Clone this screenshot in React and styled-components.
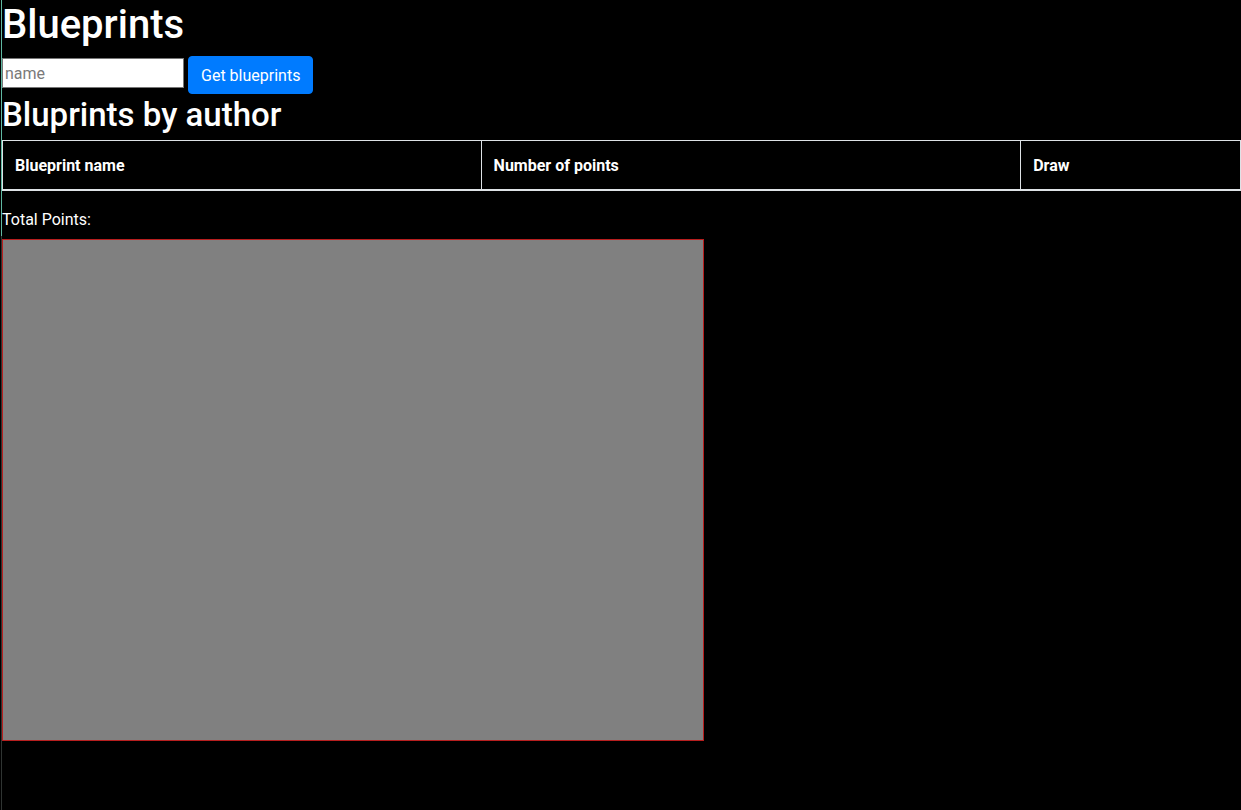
import React from "react";
import styled, { createGlobalStyle } from "styled-components";

const Global = createGlobalStyle`
  html, body {
    margin: 0;
    padding: 0;
    background-color: #000;
    min-height: 100%;
  }
  body {
    background-image: linear-gradient(to bottom, #5fb8a2 0, #5fb8a2 236px, #2f3432 236px, #2f3432 100%);
    background-size: 1px 100%;
    background-position: 1px 0;
    background-repeat: no-repeat;
    min-height: 810px;
    color: #fff;
    font-family: Roboto, "Open Sans", sans-serif;
    font-size: 16px;
    line-height: 1.5;
  }
  * { box-sizing: border-box; }
`;

const Page = styled.div`
  padding-left: 2px;
`;

const Title = styled.h1`
  margin: 0 0 8px 0;
  font-size: 40px;
  font-weight: 500;
  line-height: 50px;
  height: 48px;
`;

const SubTitle = styled.h2`
  margin: 0 0 8px 0;
  font-size: 33px;
  font-weight: 500;
  line-height: 41px;
  height: 38px;
`;

const SearchRow = styled.div`
  display: flex;
  align-items: flex-start;
  gap: 4px;
`;

const NameInput = styled.input`
  width: 182px;
  height: 30px;
  margin-top: 2px;
  padding: 1px 2px;
  border: 1px solid #767676;
  border-radius: 0;
  background: #fff;
  color: #000;
  font-family: inherit;
  font-size: 16px;
  line-height: 1.5;
  &::placeholder { color: #7a7a7a; }
`;

const PrimaryButton = styled.button`
  height: 38px;
  padding: 7px 12px 5px;
  border: 1px solid #007bff;
  border-radius: 4px;
  background: #007bff;
  color: #fff;
  font-family: inherit;
  font-size: 16px;
  line-height: 1.5;
  cursor: pointer;
`;

const Table = styled.table`
  width: 1239px;
  margin-bottom: 16px;
  border-collapse: collapse;
  color: #fff;
`;

const HeadCell = styled.th`
  width: ${(p) => p.$w}px;
  padding: 13px 12px 11px;
  text-align: left;
  font-weight: 700;
  vertical-align: bottom;
  border: 1px solid #dee2e6;
  border-bottom-width: 2px;
`;

const TotalLine = styled.div`
  padding-top: 1px;
  height: 25px;
  margin-bottom: 7px;
`;

const Canvas = styled.div`
  width: 702px;
  height: 502px;
  background: #808080;
  border: 1px solid #b81f1f;
`;

export default function App() {
  return (
    <>
      <Global />
      <Page>
        <Title>Blueprints</Title>
        <SearchRow>
          <NameInput placeholder="name" />
          <PrimaryButton>Get blueprints</PrimaryButton>
        </SearchRow>
        <SubTitle>Bluprints by author</SubTitle>
        <Table>
          <thead>
            <tr>
              <HeadCell $w={479}>Blueprint name</HeadCell>
              <HeadCell $w={540}>Number of points</HeadCell>
              <HeadCell $w={220}>Draw</HeadCell>
            </tr>
          </thead>
          <tbody></tbody>
        </Table>
        <TotalLine>Total Points: </TotalLine>
        <Canvas />
      </Page>
    </>
  );
}
